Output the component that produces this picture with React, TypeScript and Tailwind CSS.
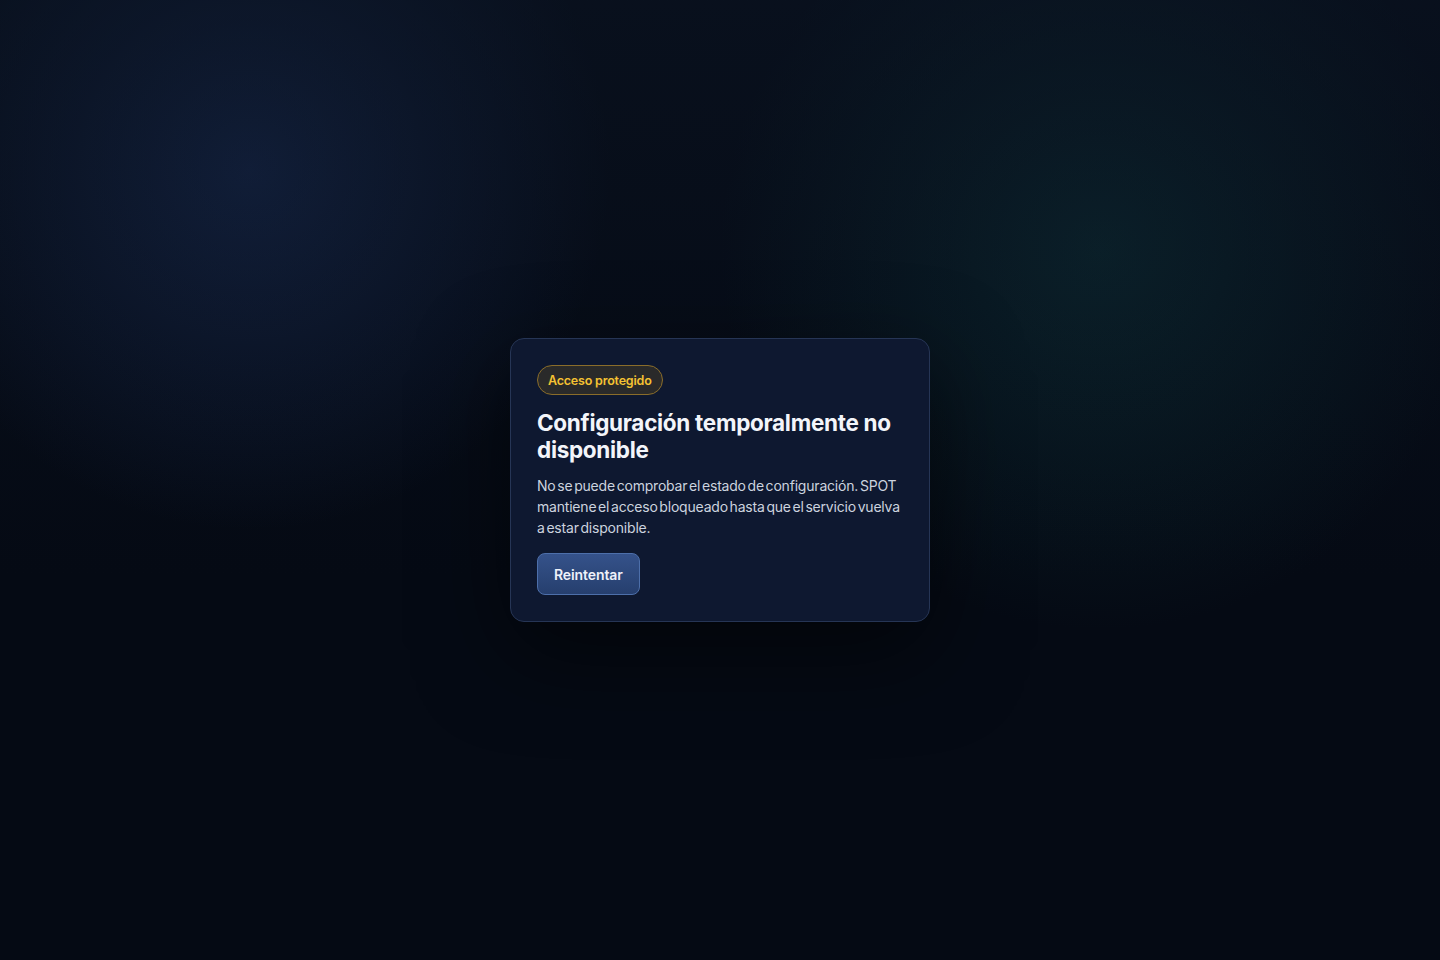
import React from 'react';

export default function App() {
  return (
    <div
      className="relative w-full h-[960px] overflow-hidden bg-[#050a14] flex items-center justify-center"
      style={{ fontFamily: 'Inter, "Noto Sans", sans-serif' }}
    >
      {/* ambient glows */}
      <div className="pointer-events-none absolute inset-0 bg-[radial-gradient(circle_at_250px_170px,rgba(30,52,100,0.55),transparent_360px)]" />
      <div className="pointer-events-none absolute inset-0 bg-[radial-gradient(circle_at_1100px_250px,rgba(14,58,62,0.5),transparent_380px)]" />
      <div className="pointer-events-none absolute inset-0 bg-[linear-gradient(180deg,rgba(12,22,38,0.5),transparent_60%)]" />

      <div className="relative w-[420px] rounded-[14px] border border-[#263555] bg-[#0e1830] px-[26px] pt-[26px] pb-[26px] shadow-[0_30px_90px_rgba(0,0,0,0.55)]">
        <span className="inline-flex h-[30px] items-center rounded-full border border-[#8a6d2a] bg-[#2a2a2a] px-[10px] pt-[2px] text-[12.5px] font-semibold tracking-[-0.2px] text-[#f5c232]">
          Acceso protegido
        </span>
        <h1 className="mt-[14px] text-[22.5px] font-bold leading-[27px] tracking-[-0.3px] text-[#f3f5fa]">
          Configuración temporalmente no disponible
        </h1>
        <p className="mt-[12px] text-[14px] leading-[21px] tracking-[-0.2px] [word-spacing:-2px] text-[#ccd3df]">
          No se puede comprobar el estado de configuración. SPOT mantiene el acceso bloqueado hasta que el servicio vuelva a estar disponible.
        </p>
        <button className="mt-[15px] h-[42px] rounded-[8px] border border-[#4d6faa] bg-[linear-gradient(180deg,#35528a,#263f6e)] px-[16px] text-[14px] font-semibold tracking-[-0.1px] text-[#eef2fa]">
          Reintentar
        </button>
      </div>
    </div>
  );
}
